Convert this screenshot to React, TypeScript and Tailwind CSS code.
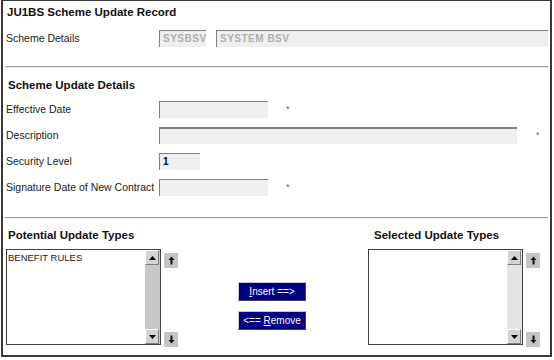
import React from 'react';

// Campo desabilitado estilo formulário antigo
function Field({ w, value, dim, bold }: { w: string; value?: string; dim?: boolean; bold?: boolean }) {
  return (
    <div
      className={`${w} h-[17px] bg-[#efefef] border-t border-l border-[#808080] flex items-center pl-[3px] text-[10px] leading-none ${
        dim ? 'text-[#b0b0b0] font-bold tracking-[0.5px]' : 'text-black'
      } ${bold ? 'font-bold' : ''}`}
    >
      {value}
    </div>
  );
}

function Row({ label, children }: { label: string; children: React.ReactNode }) {
  return (
    <div className="flex items-center h-[17px]">
      <div className="w-[156px] pl-[3px] text-[10.5px] text-[#222] whitespace-nowrap">{label}</div>
      {children}
    </div>
  );
}

function Star({ ml }: { ml: string }) {
  return <span className={`${ml} text-[9px] text-[#666] leading-none`}>*</span>;
}

function Arrow({ down }: { down?: boolean }) {
  return (
    <div className="w-[14px] h-[15px] bg-[#c4c4c4] flex items-center justify-center">
      <svg width="7" height="9" viewBox="0 0 7 9" className={down ? 'rotate-180' : ''}>
        <path d="M3.5 0.5 L6.5 4 L4.5 4 L4.5 8.5 L2.5 8.5 L2.5 4 L0.5 4 Z" fill="#111" />
      </svg>
    </div>
  );
}

function ScrollBtn({ down }: { down?: boolean }) {
  return (
    <div className="w-[14px] h-[15px] bg-[#d4d4d4] border-t border-l border-white border-r border-b border-r-[#808080] border-b-[#808080] flex items-center justify-center">
      <svg width="7" height="4" viewBox="0 0 7 4" className={down ? 'rotate-180' : ''}>
        <path d="M3.5 0 L7 4 L0 4 Z" fill="#000" />
      </svg>
    </div>
  );
}

function ListBox({ items, track }: { items: string[]; track: string }) {
  return (
    <div className="flex items-start gap-[3px]">
      <div className="w-[155px] h-[96px] border border-[#404040] bg-white flex">
        <div className="flex-1 pl-[1px] pt-[3px] text-[9.5px] text-[#222] leading-none">
          {items.map((i) => (
            <div key={i}>{i}</div>
          ))}
        </div>
        <div className={`w-[15px] flex flex-col justify-between ${track}`}>
          <ScrollBtn />
          <ScrollBtn down />
        </div>
      </div>
      <div className="h-[98px] flex flex-col justify-between pt-[4px]">
        <Arrow />
        <Arrow down />
      </div>
    </div>
  );
}

function NavButton({ children }: { children: React.ReactNode }) {
  return (
    <button className="w-[68px] h-[19px] bg-[#000080] border-t border-l border-[#c8c8d8] border-r border-b border-r-[#404060] border-b-[#404060] text-white text-[10px] leading-none flex items-center justify-center whitespace-pre">
      {children}
    </button>
  );
}

export default function App() {
  return (
    <div className="w-[554px] h-[360px] bg-white" style={{ fontFamily: '"Liberation Sans", Arial, sans-serif' }}>
      <div className="ml-[1px] w-[551px] h-[357px] border-t border-l-2 border-r-2 border-b-2 border-[#3a3a3a] flex flex-col">
        {/* Cabeçalho */}
        <div className="pl-[4px] pt-[4px] text-[11.5px] font-bold text-[#111] leading-[14px]">JU1BS Scheme Update Record</div>
        <div className="mt-[11px] flex items-center">
          <Row label="Scheme Details">
            <Field w="w-[47px]" value="SYSBSV" dim />
            <div className="w-[10px]" />
            <Field w="w-[332px]" value="SYSTEM BSV" dim />
          </Row>
        </div>
        <div className="mt-[19px] mx-[2px] h-[2px] border-t border-[#a0a0a0] border-b border-b-[#e8e8e8]" />

        {/* Detalhes */}
        <div className="pl-[5px] pt-[11px] text-[11.5px] font-bold text-[#111] leading-[13px]">Scheme Update Details</div>
        <div className="mt-[9px] flex flex-col gap-[9px]">
          <Row label="Effective Date">
            <Field w="w-[109px]" />
            <Star ml="ml-[18px]" />
          </Row>
          <Row label="Description">
            <div className="w-[358px] h-[17px] bg-[#efefef] border-t-2 border-l border-[#808080]" />
            <Star ml="ml-[19px]" />
          </Row>
          <Row label="Security Level">
            <Field w="w-[41px]" value="1" bold />
          </Row>
          <Row label="Signature Date of New Contract">
            <Field w="w-[109px]" />
            <Star ml="ml-[18px]" />
          </Row>
        </div>
        <div className="mt-[21px] mx-[2px] h-[2px] border-t border-[#a0a0a0] border-b border-b-[#e8e8e8]" />

        {/* Tipos de atualização */}
        <div className="flex">
          <div className="pl-[3px]">
            <div className="pl-[2px] pt-[10px] text-[11.5px] font-bold text-[#111] leading-[13px]">Potential Update Types</div>
            <div className="mt-[7px]">
              <ListBox items={['BENEFIT RULES']} track="bg-[#c8c8c8]" />
            </div>
          </div>
          <div className="ml-[60px] mt-[63px] flex flex-col gap-[10px]">
            <NavButton>
              <span className="underline">I</span>nsert ==&gt;
            </NavButton>
            <NavButton>
              {'<== '}
              <span className="underline">R</span>emove
            </NavButton>
          </div>
          <div className="ml-[62px]">
            <div className="pl-[6px] pt-[10px] text-[11.5px] font-bold text-[#111] leading-[13px]">Selected Update Types</div>
            <div className="mt-[7px]">
              <ListBox items={[]} track="bg-[#e4e4e4]" />
            </div>
          </div>
        </div>
      </div>
    </div>
  );
}
